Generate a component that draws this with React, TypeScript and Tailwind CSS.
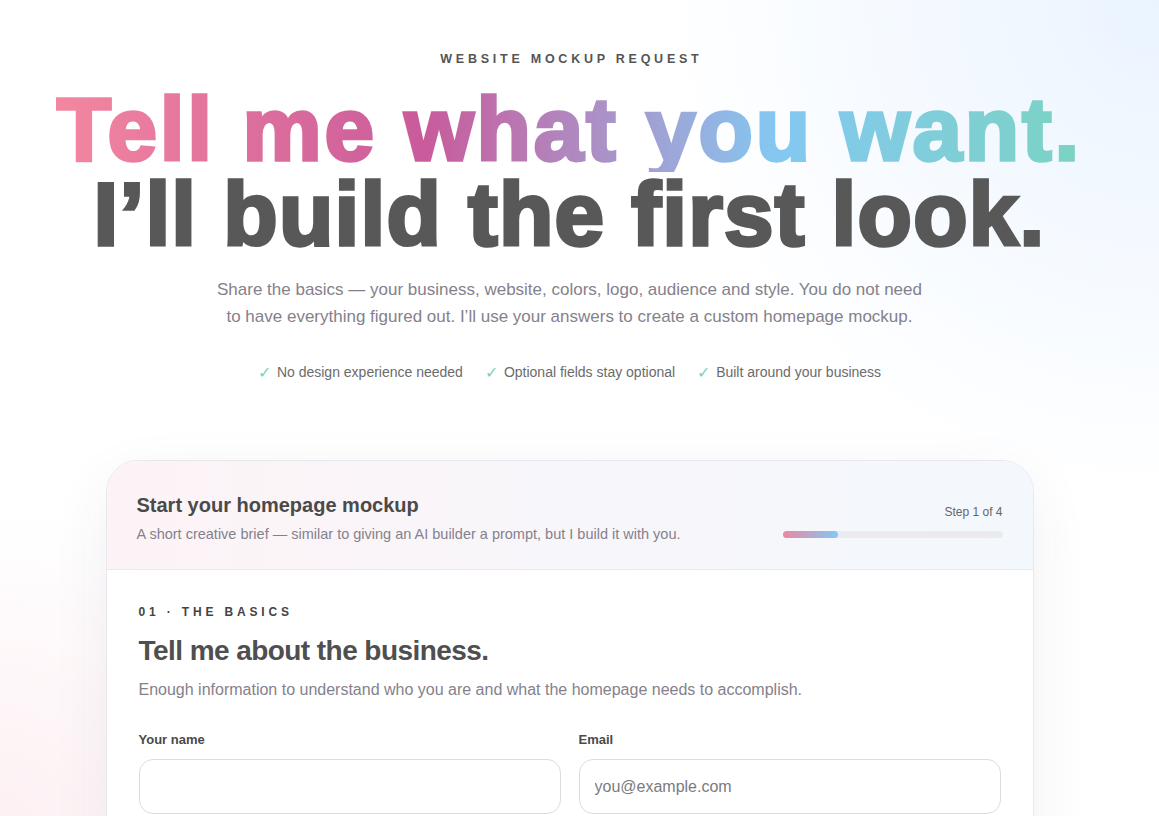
const perks = ['No design experience needed', 'Optional fields stay optional', 'Built around your business'];

const App = () => {
  return (
    <div
      className="min-h-screen bg-white bg-[radial-gradient(circle_at_100%_0%,#eaf4ff_0%,rgba(255,255,255,0)_32%),radial-gradient(circle_at_0%_80%,#fdf0f3_0%,rgba(255,255,255,0)_22%)] font-['Liberation_Sans',Arial,sans-serif] text-[#555]"
    >
      <div className="mx-auto max-w-[1159px] pl-4 pr-[36px] pt-[50px] pb-16">
        {/* Hero */}
        <div className="flex flex-col items-center text-center">
          <p className="text-[12.5px] font-bold tracking-[0.3em] text-[#555] pl-[0.3em]">WEBSITE MOCKUP REQUEST</p>
          <h1 className="mt-[18px] flex flex-col items-center whitespace-nowrap text-[89px] font-bold leading-[85px]">
            <span className="bg-[linear-gradient(90deg,#f4879f_0%,#c95b9b_36%,#a69ace_56%,#84c8f2_70%,#7bd3c2_100%)] bg-clip-text px-1 tracking-[0.032em] text-transparent [-webkit-text-stroke:3.5px_transparent]">
              Tell me what you want.
            </span>
            <span className="tracking-[0.014em] text-[#585858] [-webkit-text-stroke:3.5px_#585858]">I’ll build the first look.</span>
          </h1>
          <p className="mt-[19px] max-w-[715px] text-[17px] leading-[27px] text-[#85818c]">
            Share the basics — your business, website, colors, logo, audience and style. You do not need to have
            everything figured out. I’ll use your answers to create a custom homepage mockup.
          </p>
          <div className="mt-[31px] flex items-center gap-[22px] text-[14px] text-[#6b6b6b]">
            {perks.map((p) => (
              <span key={p} className="flex items-center gap-[6px]">
                <span className="text-[16px] text-[#7dcfc0]">✓</span>
                {p}
              </span>
            ))}
          </div>
        </div>

        {/* Card */}
        <div className="mx-auto mt-[75px] w-[928px] overflow-hidden rounded-[32px] border border-[#e9e8ee] bg-white shadow-[0_20px_60px_rgba(60,60,90,0.07)]">
          <div className="flex items-end justify-between border-b border-[#e9e8ee] bg-[linear-gradient(90deg,#fdf3f6_0%,#f8f6fa_45%,#f3f8fd_100%)] px-[30px] pt-[32px] pb-[23px]">
            <div>
              <h3 className="text-[20px] font-bold leading-6 text-[#4a4a4a]">Start your homepage mockup</h3>
              <p className="mt-[7px] text-[14.5px] text-[#85818c]">
                A short creative brief — similar to giving an AI builder a prompt, but I build it with you.
              </p>
            </div>
            <div className="mb-[8px] flex w-[220px] flex-col items-end">
              <span className="text-[12px] text-[#666]">Step 1 of 4</span>
              <div className="mt-[10px] h-[7px] w-full rounded-full bg-[#ebebef]">
                <div className="h-full w-1/4 rounded-full bg-[linear-gradient(90deg,#ec87a3,#84c8f2)]" />
              </div>
            </div>
          </div>

          <div className="px-[32px] pt-[33px] pb-10">
            <p className="text-[12px] font-bold tracking-[0.32em] text-[#444]">01 · THE BASICS</p>
            <h2 className="mt-[12px] text-[28px] font-bold leading-9 tracking-[-0.02em] text-[#4f4f4f]">Tell me about the business.</h2>
            <p className="mt-[9px] text-[16px] text-[#85818c]">
              Enough information to understand who you are and what the homepage needs to accomplish.
            </p>

            <div className="mt-[28px] grid grid-cols-2 gap-x-[18px] gap-y-6">
              <label className="flex flex-col">
                <span className="text-[13px] font-bold text-[#4a4a4a]">Your name</span>
                <input className="mt-[10px] h-[55px] rounded-[14px] border border-[#dcdce2] px-[15px] text-[16px] outline-none" />
              </label>
              <label className="flex flex-col">
                <span className="text-[13px] font-bold text-[#4a4a4a]">Email</span>
                <input
                  placeholder="you@example.com"
                  className="mt-[10px] h-[55px] rounded-[14px] border border-[#dcdce2] px-[15px] text-[16px] outline-none placeholder:text-[#7a7a80]"
                />
              </label>
              <label className="flex flex-col">
                <span className="text-[13px] font-bold text-[#4a4a4a]">Business name</span>
                <input className="mt-[10px] h-[55px] rounded-[14px] border border-[#dcdce2] px-[15px] text-[16px] outline-none" />
              </label>
              <label className="flex flex-col">
                <span className="text-[13px] font-bold text-[#4a4a4a]">Current website</span>
                <input className="mt-[10px] h-[55px] rounded-[14px] border border-[#dcdce2] px-[15px] text-[16px] outline-none" />
              </label>
            </div>
          </div>
        </div>
      </div>
    </div>
  );
};

export default App;
